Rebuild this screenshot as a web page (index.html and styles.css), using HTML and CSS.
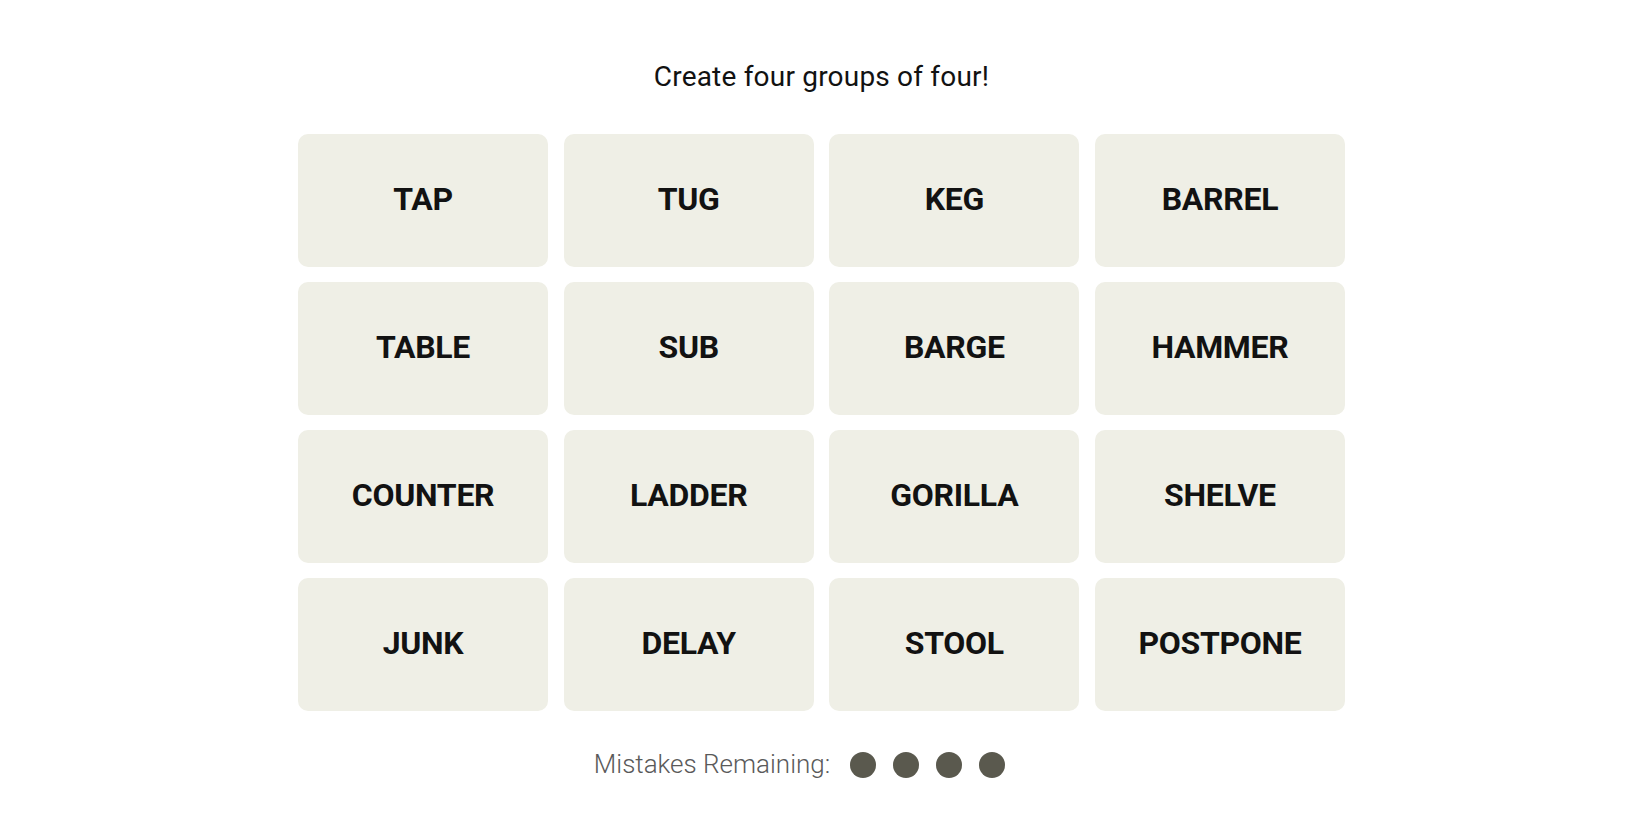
FILE: index.html
```html
<!DOCTYPE html>
<html lang="en">
<head>
<meta charset="utf-8">
<title>Connections</title>
<link rel="stylesheet" href="styles.css">
</head>
<body>
<main class="game">
  <p class="prompt">Create four groups of four!</p>
  <section class="board">
    <button class="tile">TAP</button>
    <button class="tile">TUG</button>
    <button class="tile">KEG</button>
    <button class="tile">BARREL</button>
    <button class="tile">TABLE</button>
    <button class="tile">SUB</button>
    <button class="tile">BARGE</button>
    <button class="tile">HAMMER</button>
    <button class="tile">COUNTER</button>
    <button class="tile">LADDER</button>
    <button class="tile">GORILLA</button>
    <button class="tile">SHELVE</button>
    <button class="tile">JUNK</button>
    <button class="tile">DELAY</button>
    <button class="tile">STOOL</button>
    <button class="tile">POSTPONE</button>
  </section>
  <div class="mistakes">
    <span class="mistakes-label">Mistakes Remaining:</span>
    <span class="dots">
      <span class="dot"></span>
      <span class="dot"></span>
      <span class="dot"></span>
      <span class="dot"></span>
    </span>
  </div>
</main>
</body>
</html>
```

FILE: styles.css
```css
html, body {
  margin: 0;
  padding: 0;
  background: #ffffff;
}

body {
  font-family: Roboto, "Liberation Sans", sans-serif;
  color: #121212;
}

.game {
  width: 1643px;
  display: flex;
  flex-direction: column;
  align-items: center;
  padding-top: 60px;
}

.prompt {
  margin: 0;
  font-size: 28px;
  line-height: 34px;
  font-weight: 400;
  letter-spacing: 0.2px;
  color: #121212;
}

.board {
  margin-top: 40px;
  width: 1047px;
  display: grid;
  grid-template-columns: repeat(4, 1fr);
  grid-auto-rows: 133px;
  column-gap: 15.5px;
  row-gap: 15px;
}

.tile {
  border: none;
  border-radius: 10px;
  background: #efefe6;
  color: #121212;
  font-family: Roboto, "Liberation Sans", sans-serif;
  font-weight: 700;
  font-size: 32px;
  letter-spacing: -0.3px;
  padding: 0 0 4px 0;
  display: flex;
  align-items: center;
  justify-content: center;
  cursor: pointer;
}

.mistakes {
  margin-top: 40px;
  padding-right: 44px;
  display: flex;
  align-items: center;
  gap: 20px;
  height: 27px;
}

.mistakes-label {
  font-size: 26px;
  line-height: 27px;
  color: #5a5a5a;
  font-weight: 300;
}

.dots {
  display: flex;
  gap: 17px;
}

.dot {
  width: 26px;
  height: 26px;
  border-radius: 50%;
  background: #5a594e;
}
```
